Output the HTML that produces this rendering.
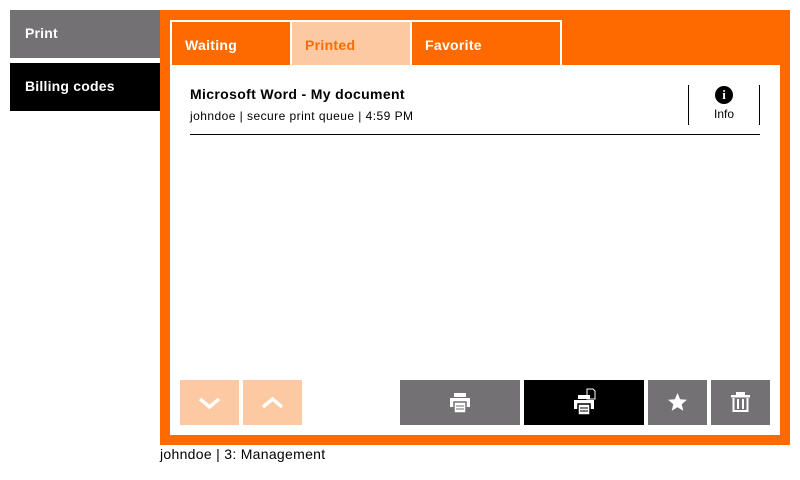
<!DOCTYPE html><html><head><style>
body{margin:0;width:800px;height:480px;background:#fff;font-family:"Liberation Sans",sans-serif;position:relative;overflow:hidden}
div{position:absolute;box-sizing:border-box}
.side{left:10px;width:150px;height:48px;color:#fff;font-weight:bold;font-size:14px;padding:16px 0 0 15px;letter-spacing:0.2px}
.tab{top:20px;height:45px;border:2px solid #fff;border-bottom:none;font-weight:bold;font-size:14px;color:#fff;padding:15px 0 0 13px;letter-spacing:0.3px}
.btn{top:380px;height:45px;background:#737173}
</style></head><body>
<div class="side" style="top:10px;background:#737173;padding-top:15px">Print</div>
<div class="side" style="top:63px;background:#000;padding-top:15px">Billing codes</div>
<div style="left:160px;top:10px;width:630px;height:435px;background:#ff6a00"></div>
<div style="left:170px;top:65px;width:610px;height:370px;background:#fff"></div>
<div class="tab" style="left:170px;width:122px;border-right:none">Waiting</div>
<div class="tab" style="left:290px;width:122px;background:#fdc9a2;color:#ff6a00;border-right:none">Printed</div>
<div class="tab" style="left:410px;width:152px;">Favorite</div>
<div style="left:190px;top:86px;font-weight:bold;font-size:14px;letter-spacing:0.35px">Microsoft Word - My document</div>
<div style="left:190px;top:109px;font-size:12px;letter-spacing:0.45px">johndoe | secure print queue | 4:59 PM</div>
<div style="left:190px;top:134px;width:570px;height:1px;background:#000"></div>
<div style="left:688px;top:85px;width:1px;height:40px;background:#000"></div>
<div style="left:759px;top:85px;width:1px;height:40px;background:#000"></div>
<div style="left:715px;top:86px;width:18px;height:18px;border-radius:50%;background:#000;color:#fff;font-weight:bold;font-size:13px;text-align:center;line-height:18px;font-family:'Liberation Serif',serif">i</div>
<div style="left:714px;top:107px;font-size:12px">Info</div>
<div class="btn" style="left:180px;width:59px;background:#fdc9a2"><svg width="59" height="45"><path d="M20 19l9.5 8 9.5-8" stroke="#fff" stroke-width="3.5" fill="none"/></svg></div>
<div class="btn" style="left:243px;width:59px;background:#fdc9a2"><svg width="59" height="45"><path d="M20 27l9.5-8 9.5 8" stroke="#fff" stroke-width="3.5" fill="none"/></svg></div>
<div class="btn" style="left:400px;width:120px"><svg width="120" height="45"><rect x="54" y="13" width="12" height="4" fill="#fff"/><rect x="50" y="18" width="20" height="9" fill="#fff"/><rect x="54" y="22" width="12" height="11" fill="#fff" stroke="#737173" stroke-width="1.5"/><path d="M56 26h8M56 29h8" stroke="#737173"/></svg></div>
<div class="btn" style="left:524px;width:120px;background:#000"><svg width="120" height="45"><path d="M63 9h6l2 2v8h-8z" fill="none" stroke="#fff"/><rect x="54" y="15" width="12" height="4" fill="#fff"/><rect x="50" y="20" width="20" height="9" fill="#fff"/><rect x="54" y="24" width="12" height="11" fill="#fff" stroke="#000" stroke-width="1.5"/><path d="M56 28h8M56 31h8" stroke="#000"/></svg></div>
<div class="btn" style="left:648px;width:59px"><svg width="59" height="45"><path d="M29.5 13l2.6 6.3 6.8.5-5.2 4.4 1.6 6.6-5.8-3.6-5.8 3.6 1.6-6.6-5.2-4.4 6.8-.5z" fill="#fff"/></svg></div>
<div class="btn" style="left:711px;width:59px"><svg width="59" height="45"><rect x="25" y="12" width="9" height="3" fill="#fff"/><rect x="20" y="15" width="19" height="2.5" fill="#fff"/><path d="M22.5 18v13h14V18" fill="none" stroke="#fff" stroke-width="2"/><path d="M27 19v10M32 19v10" stroke="#fff" stroke-width="2"/></svg></div>
<div style="left:160px;top:446px;font-size:14px;letter-spacing:0.3px">johndoe | 3: Management</div>
</body></html>
